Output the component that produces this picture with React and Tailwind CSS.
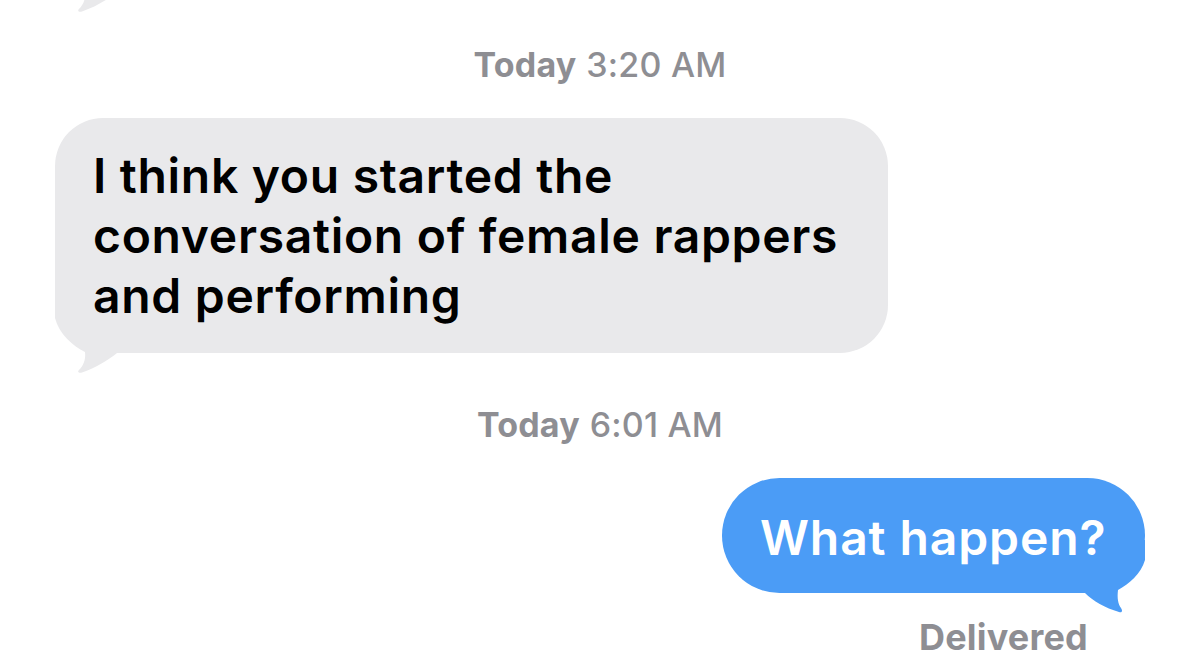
import React from 'react';

const font = { fontFamily: 'Inter, "Noto Sans", sans-serif' };

// tail of an incoming (grey) bubble, drawn against the bubble's bottom-left corner
const GrayTail = ({ className }) => (
  <svg className={className} width="90" height="75" viewBox="0 0 90 75" fill="#e9e9eb">
    <path d="M0,0 V18 C4,34 18,46 30,52 C31,60 28,66 24,70 C22,72 24,73.5 27,72.5 C40,68 52,61 62,53 H90 V0 Z" />
  </svg>
);

// tail of an outgoing (blue) bubble, bottom-right corner
const BlueTail = ({ className }) => (
  <svg className={className} width="90" height="75" viewBox="0 0 90 75" fill="#4b9cf6">
    <path d="M90,0 V20 C86,34 74,44 63,50 C62,58 63,64 66,68 C68,71 67,73 64,72 C50,68 38,61 30,53 H0 V0 Z" />
  </svg>
);

const Timestamp = ({ day, time, className }) => (
  <div className={`text-center text-[34px] leading-[40px] tracking-[0.2px] text-[#8e8e93] ${className}`}>
    <span className="font-bold">{day}</span> <span className="font-medium">{time}</span>
  </div>
);

export default function App() {
  return (
    <div className="w-[1200px] h-[661px] bg-white overflow-hidden" style={font}>
      {/* bottom of the previous bubble's tail, cut off by the top edge */}
      <div className="relative h-[14px] overflow-hidden">
        <GrayTail className="absolute left-[55px] top-[-61px]" />
      </div>

      <Timestamp day="Today" time="3:20 AM" className="mt-[31px]" />

      <div className="relative ml-[55px] mt-[33px] w-[833px] rounded-[48px] bg-[#e9e9eb] pl-[38px] pr-[20px] pt-[28px] pb-[27px]">
        <GrayTail className="absolute left-0 bottom-[-22px]" />
        <p className="relative text-[48px] leading-[60px] font-semibold text-black tracking-[0.7px]">
          I think you started the
          <br />
          conversation of female rappers
          <br />
          and performing
        </p>
      </div>

      <Timestamp day="Today" time="6:01 AM" className="mt-[52px]" />

      <div className="flex justify-end pr-[55px] mt-[33px]">
        <div className="relative w-[423px] rounded-[58px] bg-[#4b9cf6] pl-[38px] pt-[30px] pb-[25px]">
          <BlueTail className="absolute right-0 bottom-[-22px]" />
          <p className="relative text-[48px] leading-[60px] font-semibold text-white tracking-[0.9px]">What happen?</p>
        </div>
      </div>

      <div className="flex justify-end pr-[112px] mt-[24px]">
        <span className="text-[36px] leading-[40px] font-bold tracking-[0.2px] text-[#8e8e93]">Delivered</span>
      </div>
    </div>
  );
}
